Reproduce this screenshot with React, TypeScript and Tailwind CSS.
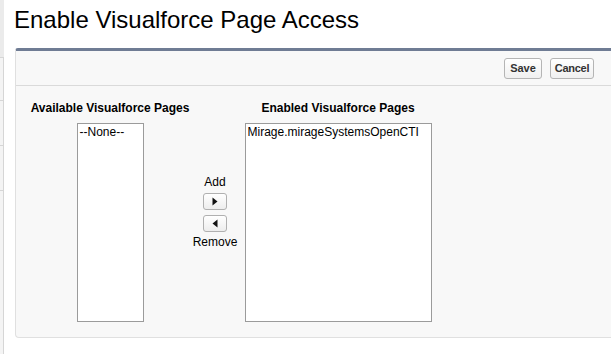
const ArrowButton = ({ dir }: { dir: "right" | "left" }) => (
  <button className="w-[24px] h-[17px] rounded-[3px] border border-[#b0b0b0] bg-gradient-to-b from-white to-[#ededed] flex items-center justify-center">
    <svg width="6" height="9" viewBox="0 0 6 9">
      {dir === "right" ? (
        <polygon points="0.5,0.5 5.5,4.5 0.5,8.5" fill="#111" />
      ) : (
        <polygon points="5.5,0.5 0.5,4.5 5.5,8.5" fill="#111" />
      )}
    </svg>
  </button>
);

const App = () => {
  return (
    <div
      className="w-[611px] h-[354px] overflow-hidden bg-white flex"
      style={{ fontFamily: '"Liberation Sans", Arial, sans-serif' }}
    >
      {/* sidebar edge */}
      <div className="w-[4px] flex flex-col shrink-0">
        <div className="h-[57px] bg-[#ebebeb]" />
        <div className="h-[43px] bg-[#f4f4f4] border-t border-r border-[#d6d6d6]" />
        <div className="h-[45px] bg-[#f4f4f4] border-t border-r border-[#d6d6d6]" />
        <div className="h-[45px] bg-[#f4f4f4] border-t border-r border-[#d6d6d6]" />
        <div className="flex-1 bg-[#f4f4f4] border-t border-r border-[#d6d6d6]" />
      </div>

      {/* main */}
      <div className="pl-[10px] pt-[6px] flex flex-col">
        <h1 className="text-[24px] leading-[28px] text-black">Enable Visualforce Page Access</h1>

        <div className="mt-[14px] ml-[1px] w-[600px] bg-[#f8f8f8] border-t-[3px] border-t-[#6f7c94] border-l border-b border-[#e0e0e0] rounded-bl-[4px] rounded-tl-[3px]">
          {/* button bar */}
          <div className="h-[35px] flex items-center justify-end gap-[8px] pr-[21px] border-b border-[#dadada]">
            <button className="w-[38px] h-[21px] rounded-[3px] border border-[#b5b5b5] bg-gradient-to-b from-white to-[#f0f0f0] text-[11px] font-bold text-[#333]">
              Save
            </button>
            <button className="w-[44px] h-[21px] rounded-[3px] border border-[#b5b5b5] bg-gradient-to-b from-white to-[#f0f0f0] text-[11px] font-bold text-[#333] tracking-[-0.3px]">
              Cancel
            </button>
          </div>

          {/* body */}
          <div className="pt-[15px] pb-[15px] pl-[14px] flex items-center">
            <div className="w-[160px] flex flex-col items-center">
              <div className="text-[12px] leading-[14px] font-bold text-black">Available Visualforce Pages</div>
              <div className="mt-[8px] w-[67px] h-[199px] bg-white border border-[#9b9b9b] px-[2px] pt-[1px] text-[12px] leading-[14px] text-black">
                --None--
              </div>
            </div>

            <div className="w-[50px] flex flex-col items-center text-[12px] leading-[14px] text-black">
              <span>Add</span>
              <div className="mt-[4px]">
                <ArrowButton dir="right" />
              </div>
              <div className="mt-[5px]">
                <ArrowButton dir="left" />
              </div>
              <span className="mt-[3px]">Remove</span>
            </div>

            <div className="w-[196px] flex flex-col items-center">
              <div className="text-[12px] leading-[14px] font-bold text-black">Enabled Visualforce Pages</div>
              <div className="mt-[8px] w-[187px] h-[199px] bg-white border border-[#9b9b9b] px-[2px] pt-[1px] text-[12px] leading-[14px] text-black">
                Mirage.mirageSystemsOpenCTI
              </div>
            </div>
          </div>
        </div>
      </div>
    </div>
  );
};

export default App;
